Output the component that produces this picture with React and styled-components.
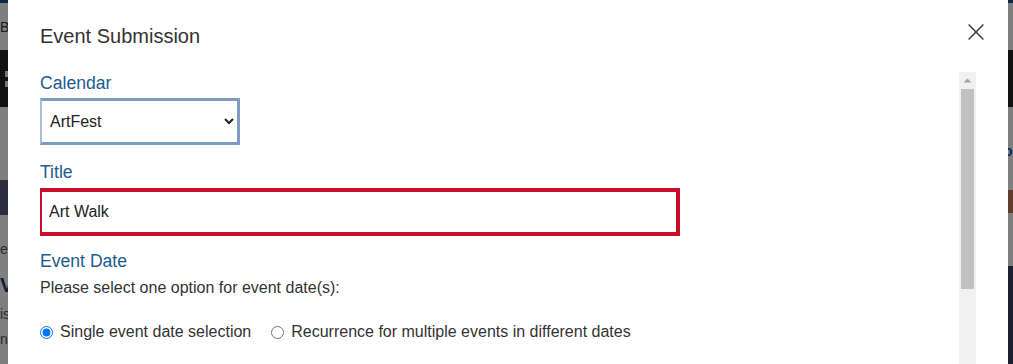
import React from "react";
import styled, { createGlobalStyle } from "styled-components";

const GlobalStyle = createGlobalStyle`
  html, body { margin: 0; padding: 0; }
  body {
    font-family: "Liberation Sans", Arial, sans-serif;
    background: #fff;
    overflow: hidden;
  }
  * { box-sizing: border-box; }
`;

/* ---------- page behind the dialog ---------- */
const BackPage = styled.div`
  width: 1013px;
  height: 364px;
  overflow: hidden;
  display: flex;
  flex-direction: column;
  background: #fff;
  color: #444;
`;
const BackStripe = styled.div`
  flex: none;
  height: 3px;
  background: #1d4f8c;
`;
const BackHeader = styled.div`
  flex: none;
  height: 47px;
  width: 8px;
  overflow: hidden;
  display: flex;
  align-items: center;
  font-size: 14px;
  color: #333;
  white-space: nowrap;
`;
const BackNav = styled.div`
  flex: none;
  height: 57px;
  background: #222;
  display: flex;
  align-items: center;
  padding-left: 5px;
`;
const GridIcon = styled.div`
  display: grid;
  grid-template-columns: repeat(2, 5px);
  gap: 4px;
  & > span { width: 5px; height: 6px; background: #eee; }
`;
const BackContent = styled.div`
  flex: 1;
  display: flex;
  justify-content: space-between;
`;
const BackLeft = styled.div`
  width: 8px;
  overflow: hidden;
  display: flex;
  flex-direction: column;
  padding-top: 73px;
  white-space: nowrap;
  font-size: 14px;
  line-height: 25px;
`;
const BackBanner = styled.div`
  height: 35px;
  background: ${(p) => p.$color};
  margin-bottom: ${(p) => p.$gap || 0}px;
`;
const BackLine = styled.div`
  color: #555;
`;
const BackHeading = styled.div`
  font-size: 20px;
  font-weight: 700;
  line-height: 30px;
  color: #1f3a78;
  margin: 8px 0 2px;
`;
const BackRight = styled.div`
  width: 5px;
  overflow: hidden;
  display: flex;
  flex-direction: column;
  align-items: flex-start;
  padding-top: 36px;
`;
const BackLink = styled.div`
  font-size: 14px;
  font-weight: 700;
  color: #1f4fbf;
  height: 47px;
  margin-left: -4px;
`;
const BackImage = styled.div`
  width: 5px;
  height: 23px;
  background: #c27a5c;
  margin-bottom: 53px;
`;
const BackFooter = styled.div`
  width: 5px;
  flex: 1;
  background: #344060;
`;

/* ---------- dialog ---------- */
const Overlay = styled.div`
  position: fixed;
  inset: 0;
  background: rgba(0, 0, 0, 0.5);
  display: flex;
  align-items: flex-start;
  padding-left: 8px;
`;
const Modal = styled.div`
  width: 1000px;
  background: #fff;
  display: flex;
  flex-direction: column;
  padding: 0 32px;
`;
const Header = styled.div`
  display: flex;
  align-items: flex-start;
  justify-content: space-between;
  padding: 24px 0;
`;
const ModalTitle = styled.h2`
  margin: 0;
  font-size: 20px;
  line-height: 24px;
  font-weight: 400;
  color: #333;
`;
const CloseButton = styled.button`
  width: 32px;
  height: 32px;
  margin: -8px -16px 0 0;
  padding: 0;
  border: none;
  background: none;
  display: flex;
  align-items: center;
  justify-content: center;
  cursor: pointer;
`;
const Body = styled.div`
  height: 420px;
  display: flex;
`;
const Content = styled.div`
  flex: 1;
  min-width: 0;
  overflow: hidden;
  padding: 1px 0 20px;
`;
const ScrollBar = styled.div`
  flex: none;
  width: 17px;
  background: #f1f1f1;
  display: flex;
  flex-direction: column;
`;
const ScrollArrow = styled.div`
  flex: none;
  height: 17px;
  display: flex;
  align-items: center;
  justify-content: center;
`;
const ScrollThumb = styled.div`
  flex: none;
  height: 200px;
  margin: 0 2px;
  background: #c1c1c1;
`;
const Field = styled.div`
  display: flex;
  flex-direction: column;
  align-items: flex-start;
  margin-bottom: ${(p) => p.$gap ?? 17}px;
`;
const Label = styled.label`
  font-size: 17.6px;
  line-height: 21px;
  color: #1d5b8f;
`;
const Select = styled.select`
  margin-top: 4px;
  width: 200px;
  height: 47px;
  border-style: solid;
  border-width: 3px 3px 3px 2px;
  border-color: #7f9dc2 #7f9dc2 #7f9dc2 #a9bfd6;
  border-radius: 0;
  background: #fff;
  padding: 0 4px;
  font-family: "Liberation Sans", Arial, sans-serif;
  font-size: 16px;
  color: #222;
  outline: none;
`;
const TextInput = styled.input`
  margin: ${(p) => (p.$invalid ? "5px 0 0 -2px" : "4px 0 0 0")};
  width: ${(p) => p.$width || 642}px;
  height: ${(p) => (p.$invalid ? 48 : 44)}px;
  border: ${(p) => (p.$invalid ? "4px solid #c8102e" : "1px solid #9aa5b1")};
  border-radius: 0;
  padding: 0 ${(p) => (p.$invalid ? 7 : 9)}px;
  font-family: "Liberation Sans", Arial, sans-serif;
  font-size: 16px;
  color: #222;
  outline: none;
`;
const TextArea = styled.textarea`
  margin-top: 4px;
  width: 640px;
  height: 120px;
  border: 1px solid #9aa5b1;
  resize: none;
  font-family: "Liberation Sans", Arial, sans-serif;
  font-size: 16px;
`;
const HelpText = styled.p`
  margin: 4px 0 0;
  font-size: 16px;
  line-height: 24px;
  color: #333;
`;
const RadioGroup = styled.div`
  margin-top: 20px;
  display: flex;
  align-items: center;
  gap: 20px;
`;
const RadioOption = styled.label`
  display: flex;
  align-items: center;
  gap: 7px;
  font-size: 16px;
  line-height: 24px;
  color: #333;
`;
const Radio = styled.input`
  margin: 0;
  width: 13px;
  height: 13px;
`;
const Row = styled.div`
  display: flex;
  gap: 24px;
  margin-bottom: 17px;
`;

const CloseIcon = () => (
  <svg width="16" height="16" viewBox="0 0 16 16" aria-hidden="true">
    <path d="M0.6 0.6L15.4 15.4M15.4 0.6L0.6 15.4" stroke="#333" strokeWidth="1.4" fill="none" />
  </svg>
);

const UpArrow = () => (
  <svg width="9" height="5" viewBox="0 0 9 5" aria-hidden="true">
    <path d="M0.5 4.5h8l-4-4z" fill="#a3a3a3" />
  </svg>
);

export default function App() {
  return (
    <>
      <GlobalStyle />
      <BackPage aria-hidden="true">
        <BackStripe />
        <BackHeader>Bo</BackHeader>
        <BackNav>
          <GridIcon>
            <span /><span /><span /><span />
          </GridIcon>
        </BackNav>
        <BackContent>
          <BackLeft>
            <BackBanner $color="#5c5a7c" $gap={22} />
            <BackLine>er</BackLine>
            <BackHeading>V</BackHeading>
            <BackLine>is</BackLine>
            <BackLine>nc</BackLine>
          </BackLeft>
          <BackRight>
            <BackLink>o</BackLink>
            <BackImage />
            <BackFooter />
          </BackRight>
        </BackContent>
      </BackPage>

      <Overlay>
        <Modal role="dialog" aria-labelledby="dlg-title">
          <Header>
            <ModalTitle id="dlg-title">Event Submission</ModalTitle>
            <CloseButton aria-label="Close">
              <CloseIcon />
            </CloseButton>
          </Header>
          <Body>
            <Content>
              <Field>
                <Label htmlFor="cal">Calendar</Label>
                <Select id="cal" defaultValue="ArtFest">
                  <option>ArtFest</option>
                  <option>Gallery Events</option>
                </Select>
              </Field>
              <Field $gap={15}>
                <Label htmlFor="title">Title</Label>
                <TextInput id="title" $invalid defaultValue="Art Walk" />
              </Field>
              <Field>
                <Label>Event Date</Label>
                <HelpText>Please select one option for event date(s):</HelpText>
                <RadioGroup>
                  <RadioOption>
                    <Radio type="radio" name="datemode" defaultChecked />
                    Single event date selection
                  </RadioOption>
                  <RadioOption>
                    <Radio type="radio" name="datemode" />
                    Recurrence for multiple events in different dates
                  </RadioOption>
                </RadioGroup>
              </Field>
              <Field>
                <Label htmlFor="date">Date</Label>
                <TextInput id="date" $width={200} />
              </Field>
              <Row>
                <Field $gap={0}>
                  <Label htmlFor="start">Start Time</Label>
                  <TextInput id="start" $width={200} />
                </Field>
                <Field $gap={0}>
                  <Label htmlFor="end">End Time</Label>
                  <TextInput id="end" $width={200} />
                </Field>
              </Row>
              <Field>
                <Label htmlFor="loc">Location</Label>
                <TextInput id="loc" $width={640} />
              </Field>
            </Content>
            <ScrollBar aria-hidden="true">
              <ScrollArrow>
                <UpArrow />
              </ScrollArrow>
              <ScrollThumb />
            </ScrollBar>
          </Body>
        </Modal>
      </Overlay>
    </>
  );
}
